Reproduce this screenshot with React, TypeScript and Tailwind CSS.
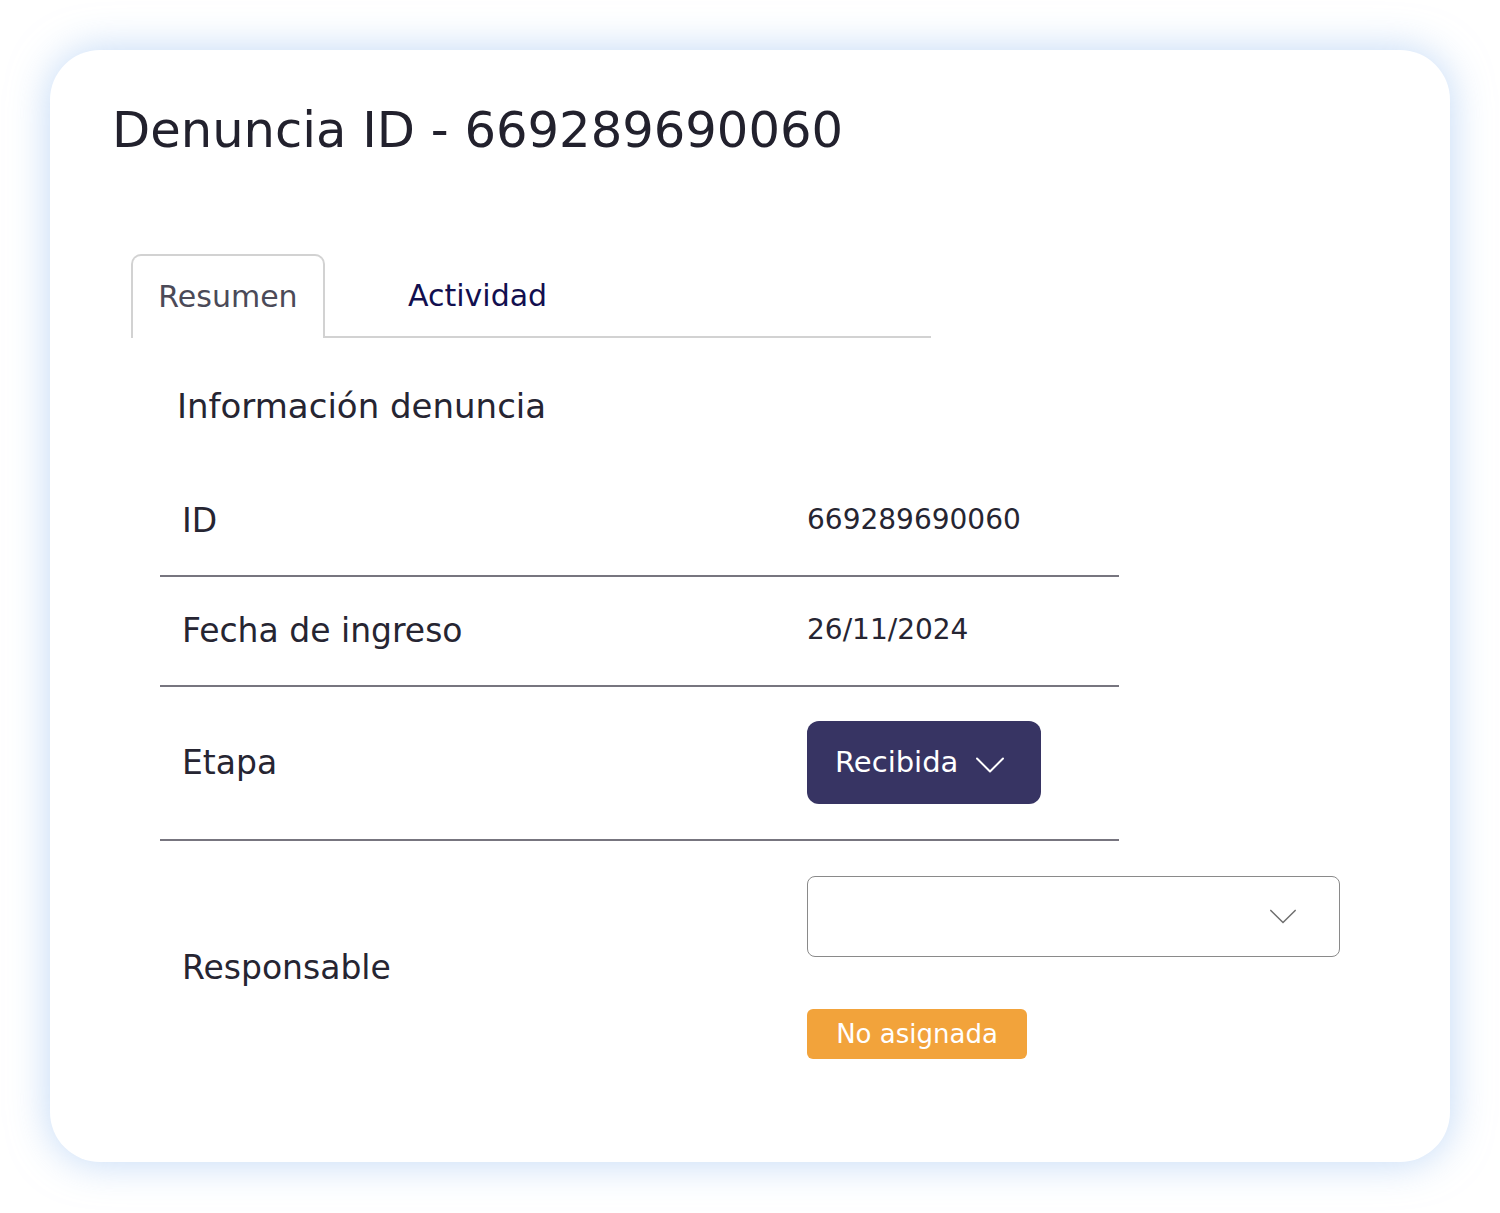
import React from "react";

const FONT = "font-['DejaVu_Sans','Liberation_Sans',sans-serif]";

function Chevron({ className, strokeWidth = 2 }: { className?: string; strokeWidth?: number }) {
  return (
    <svg viewBox="0 0 28 16" fill="none" className={className}>
      <path
        d="M1 1.5 L14 14.5 L27 1.5"
        stroke="currentColor"
        strokeWidth={strokeWidth}
        strokeLinecap="round"
        strokeLinejoin="round"
      />
    </svg>
  );
}

function Divider() {
  return <div className="h-[2px] w-[959px] bg-[#77757f]" />;
}

function Row({
  label,
  height,
  children,
}: {
  label: string;
  height: string;
  children: React.ReactNode;
}) {
  return (
    <div className={`grid grid-cols-[647px_auto] items-center ${height}`}>
      <span className="pl-[22px] text-[33px] leading-none text-[#262532]">{label}</span>
      <div>{children}</div>
    </div>
  );
}

export default function App() {
  return (
    <div className={`min-h-[1213px] bg-white px-[50px] pt-[50px] pb-[51px] ${FONT}`}>
      <div className="h-[1112px] rounded-[50px] bg-white pl-[62px] pt-[56px] shadow-[0_0_40px_rgba(150,190,240,0.6)]">
        <h1 className="text-[49.6px] font-normal leading-none text-[#22212d]">
          Denuncia ID - 669289690060
        </h1>

        {/* tabs */}
        <div className="ml-[19px] mt-[98px] flex w-[800px] items-end">
          <div className="flex h-[84px] w-[194px] items-center justify-center rounded-t-[10px] border-[2.5px] border-b-0 border-[#d2d2d2] text-[30px] leading-none text-[#4b4a58]">
            Resumen
          </div>
          <div className="flex h-[84px] flex-1 items-center border-b-[2.5px] border-[#d2d2d2] pl-[83px] pt-[2px] text-[30px] leading-none text-[#120f4f]">
            Actividad
          </div>
        </div>

        <h2 className="ml-[65px] mt-[51px] text-[34px] font-normal leading-none text-[#262532]">
          Información denuncia
        </h2>

        <div className="ml-[48px] mt-[44px]">
          <Row label="ID" height="h-[108px]">
            <span className="text-[28px] leading-none text-[#262532]">669289690060</span>
          </Row>
          <Divider />
          <Row label="Fecha de ingreso" height="h-[108px]">
            <span className="text-[28px] leading-none text-[#262532]">26/11/2024</span>
          </Row>
          <Divider />
          <Row label="Etapa" height="h-[152px]">
            <button className="flex h-[83px] w-[234px] items-center gap-[18px] rounded-[12px] bg-[#373463] pl-[28px] text-[29px] leading-none text-white">
              Recibida
              <Chevron className="mt-[4px] h-[16px] w-[28px]" />
            </button>
          </Row>
          <Divider />
          <Row label="Responsable" height="py-[35px]">
            <div className="flex flex-col items-start">
              <div className="flex h-[81px] w-[533px] items-center justify-end rounded-[8px] border-[1.5px] border-[#8a8a8a] pr-[42px] text-[#6f6f6f]">
                <Chevron className="h-[15px] w-[28px]" strokeWidth={1.6} />
              </div>
              <span className="mt-[52px] flex h-[50px] w-[220px] items-center justify-center rounded-[6px] bg-[#f2a33b] text-[26px] leading-none text-white">
                No asignada
              </span>
            </div>
          </Row>
        </div>
      </div>
    </div>
  );
}
